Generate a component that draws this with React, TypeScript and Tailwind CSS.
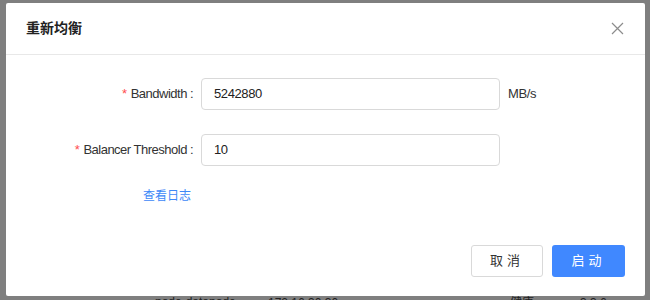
import React from "react";

const font = { fontFamily: '"Liberation Sans", "Noto Sans CJK SC", sans-serif' };

const FormRow: React.FC<{ label: string; value: string; suffix?: string }> = ({ label, value, suffix }) => (
  <div className="flex items-center">
    <div className="w-[187px] flex justify-end items-center text-[13px] tracking-[-0.5px] text-[#333]">
      <span className="text-[#ff4d4f] mr-[4px]">*</span>
      <span>{label}</span>
      <span className="ml-[3px]">:</span>
    </div>
    <div className="ml-[8px] w-[299px] h-[32px] border border-[#d9d9d9] rounded-[4px] flex items-center px-[12px] text-[13px] tracking-[-0.4px] text-[#222]">
      {value}
    </div>
    {suffix && <span className="ml-[8px] text-[13px] tracking-[-0.4px] text-[#333]">{suffix}</span>}
  </div>
);

export default function App() {
  return (
    <div className="relative w-[650px] h-[300px] bg-[#7f7f7f] overflow-hidden" style={font}>
      {/* faded page content behind the mask */}
      <div className="absolute left-0 top-[120px] w-[6px] h-[26px] rounded-full border-2 border-[#3a5fa8] -translate-x-[10px]" />
      <div className="absolute left-0 top-[224px] w-[6px] h-[26px] rounded-full border-2 border-[#3a5fa8] -translate-x-[10px]" />
      <div className="absolute left-[155px] top-[293px] text-[12px] text-[#222]">node-datanode</div>
      <div className="absolute left-[268px] top-[294px] text-[12px] text-[#222]">172.16.30.30</div>
      <div className="absolute left-[510px] top-[294px] text-[12px] text-[#222]">健康</div>
      <div className="absolute left-[580px] top-[294px] text-[12px] text-[#222]">3.3.6</div>

      {/* modal */}
      <div className="absolute left-[6px] top-[3px] w-[639px] h-[293px] bg-white rounded-[2px] flex flex-col">
        <div className="h-[52px] flex items-center justify-between pl-[20px] pr-[21px] border-b border-[#e8e8e8]">
          <span className="text-[14px] font-bold text-[#222]">重新均衡</span>
          <svg width="13" height="13" viewBox="0 0 13 13" className="text-[#8c8c8c]">
            <path d="M1 1L12 12M12 1L1 12" stroke="currentColor" strokeWidth="1.2" />
          </svg>
        </div>

        <div className="flex flex-col pt-[23px] gap-[24px]">
          <FormRow label="Bandwidth" value="5242880" suffix="MB/s" />
          <FormRow label="Balancer Threshold" value="10" />
        </div>

        <div className="pl-[137px] mt-[21px] text-[12px] text-[#3d88f7]">查看日志</div>

        <div className="mt-auto mb-[19px] flex justify-end gap-[9px] pr-[20px]">
          <button className="w-[72px] h-[32px] border border-[#d9d9d9] rounded-[3px] bg-white text-[13px] text-[#333] tracking-[4px]">
            取消
          </button>
          <button className="w-[73px] h-[32px] rounded-[3px] bg-[#4088ff] text-[13px] text-white tracking-[4px]">
            启动
          </button>
        </div>
      </div>
    </div>
  );
}
